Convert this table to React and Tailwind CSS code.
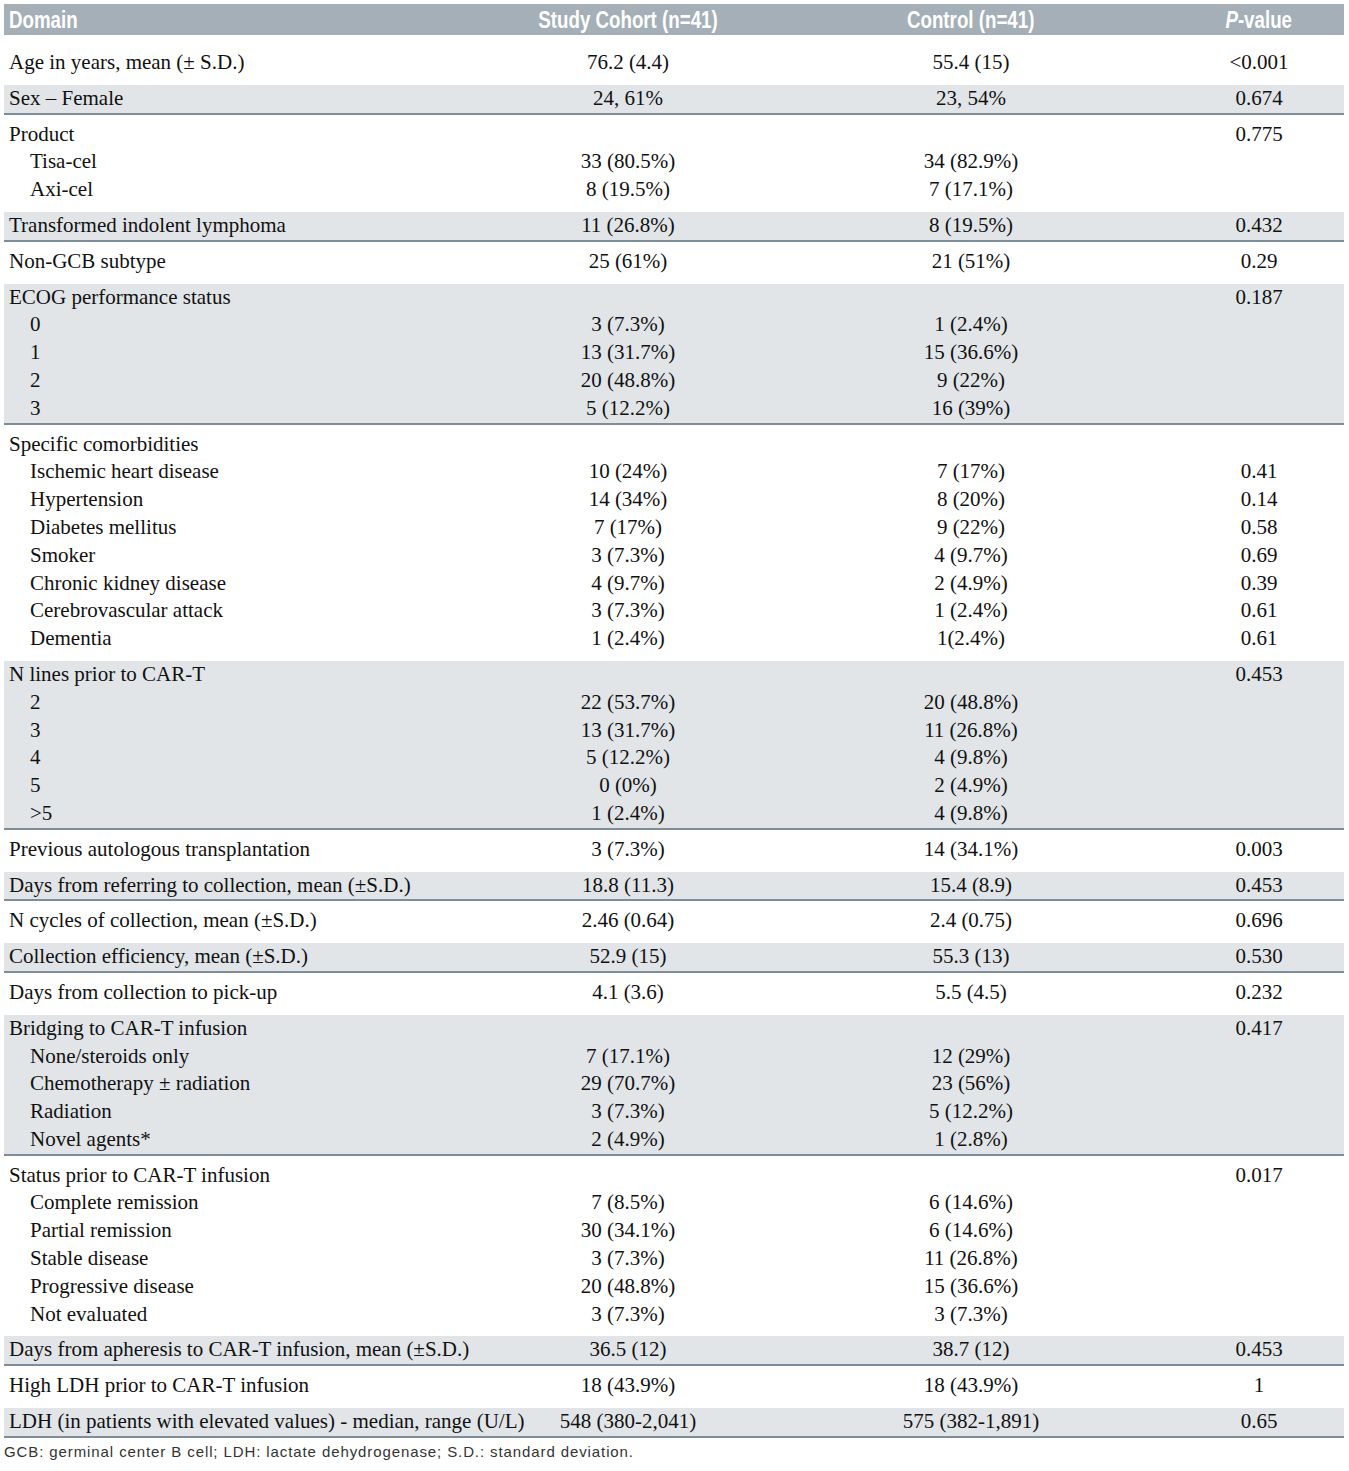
import React from "react";

const groups = [
    { gray: false, first: true, rows: [["Age in years, mean (± S.D.)", "76.2 (4.4)", "55.4 (15)", "<0.001"]] },
    { gray: true, rows: [["Sex – Female", "24, 61%", "23, 54%", "0.674"]] },
    {
        gray: false,
        rows: [
            ["Product", "", "", "0.775"],
            ["Tisa-cel", "33 (80.5%)", "34 (82.9%)", ""],
            ["Axi-cel", "8 (19.5%)", "7 (17.1%)", ""],
        ],
    },
    { gray: true, rows: [["Transformed indolent lymphoma", "11 (26.8%)", "8 (19.5%)", "0.432"]] },
    { gray: false, rows: [["Non-GCB subtype", "25 (61%)", "21 (51%)", "0.29"]] },
    {
        gray: true,
        rows: [
            ["ECOG performance status", "", "", "0.187"],
            ["0", "3 (7.3%)", "1 (2.4%)", ""],
            ["1", "13 (31.7%)", "15 (36.6%)", ""],
            ["2", "20 (48.8%)", "9 (22%)", ""],
            ["3", "5 (12.2%)", "16 (39%)", ""],
        ],
    },
    {
        gray: false,
        rows: [
            ["Specific comorbidities", "", "", ""],
            ["Ischemic heart disease", "10 (24%)", "7 (17%)", "0.41"],
            ["Hypertension", "14 (34%)", "8 (20%)", "0.14"],
            ["Diabetes mellitus", "7 (17%)", "9 (22%)", "0.58"],
            ["Smoker", "3 (7.3%)", "4 (9.7%)", "0.69"],
            ["Chronic kidney disease", "4 (9.7%)", "2 (4.9%)", "0.39"],
            ["Cerebrovascular attack", "3 (7.3%)", "1 (2.4%)", "0.61"],
            ["Dementia", "1 (2.4%)", "1(2.4%)", "0.61"],
        ],
    },
    {
        gray: true,
        rows: [
            ["N lines prior to CAR-T", "", "", "0.453"],
            ["2", "22 (53.7%)", "20 (48.8%)", ""],
            ["3", "13 (31.7%)", "11 (26.8%)", ""],
            ["4", "5 (12.2%)", "4 (9.8%)", ""],
            ["5", "0 (0%)", "2 (4.9%)", ""],
            [">5", "1 (2.4%)", "4 (9.8%)", ""],
        ],
    },
    { gray: false, rows: [["Previous autologous transplantation", "3 (7.3%)", "14 (34.1%)", "0.003"]] },
    { gray: true, rows: [["Days from referring to collection, mean (±S.D.)", "18.8 (11.3)", "15.4 (8.9)", "0.453"]] },
    { gray: false, rows: [["N cycles of collection, mean (±S.D.)", "2.46 (0.64)", "2.4 (0.75)", "0.696"]] },
    { gray: true, rows: [["Collection efficiency, mean (±S.D.)", "52.9 (15)", "55.3 (13)", "0.530"]] },
    { gray: false, rows: [["Days from collection to pick-up", "4.1 (3.6)", "5.5 (4.5)", "0.232"]] },
    {
        gray: true,
        rows: [
            ["Bridging to CAR-T infusion", "", "", "0.417"],
            ["None/steroids only", "7 (17.1%)", "12 (29%)", ""],
            ["Chemotherapy ± radiation", "29 (70.7%)", "23 (56%)", ""],
            ["Radiation", "3 (7.3%)", "5 (12.2%)", ""],
            ["Novel agents*", "2 (4.9%)", "1 (2.8%)", ""],
        ],
    },
    {
        gray: false,
        rows: [
            ["Status prior to CAR-T infusion", "", "", "0.017"],
            ["Complete remission", "7 (8.5%)", "6 (14.6%)", ""],
            ["Partial remission", "30 (34.1%)", "6 (14.6%)", ""],
            ["Stable disease", "3 (7.3%)", "11 (26.8%)", ""],
            ["Progressive disease", "20 (48.8%)", "15 (36.6%)", ""],
            ["Not evaluated", "3 (7.3%)", "3 (7.3%)", ""],
        ],
    },
    { gray: true, rows: [["Days from apheresis to CAR-T infusion, mean (±S.D.)", "36.5 (12)", "38.7 (12)", "0.453"]] },
    { gray: false, rows: [["High LDH prior to CAR-T infusion", "18 (43.9%)", "18 (43.9%)", "1"]] },
    { gray: true, rows: [["LDH (in patients with elevated values) - median, range (U/L)", "548 (380-2,041)", "575 (382-1,891)", "0.65"]] },
];

const cols = "grid grid-cols-[484px_280px_406px_170px]";

const Row = ({ cells, sub }) => (
    <div className={`${cols} leading-[27.8px]`}>
        <div className={`${sub ? "pl-[26px]" : "pl-[5px]"} whitespace-nowrap`}>{cells[0]}</div>
        <div className="text-center whitespace-nowrap">{cells[1]}</div>
        <div className="text-center whitespace-nowrap">{cells[2]}</div>
        <div className="text-center whitespace-nowrap">{cells[3]}</div>
    </div>
);

// header labels are a heavy condensed face in the print; squeeze Arial-width bold to fit
const HeadCell = ({ children, left }) => (
    <div className={left ? "pl-[5px]" : "flex justify-center"}>
        <span className={`inline-block whitespace-nowrap scale-x-[0.78] ${left ? "origin-left" : "origin-center"}`}>
            {children}
        </span>
    </div>
);

const App = () => {
    return (
        <div className="min-h-screen bg-white p-[4px]">
            <div className="w-[1340px]">
                <div className={`${cols} h-[31px] items-center bg-[#a4afb8] text-white font-bold text-[24px] leading-[31px] font-['Liberation_Sans',sans-serif]`}>
                    <HeadCell left>Domain</HeadCell>
                    <HeadCell>Study Cohort (n=41)</HeadCell>
                    <HeadCell>Control (n=41)</HeadCell>
                    <HeadCell>
                        <span className="italic">P</span>-value
                    </HeadCell>
                </div>

                <div className="font-['Liberation_Serif',serif] text-[21px] text-[#111]">
                    {groups.map((g, i) => (
                        <div
                            key={i}
                            className={
                                g.gray
                                    ? "bg-[#e1e5e8] border-b-2 border-[#7d8d99]"
                                    : g.first
                                    ? "pt-[14px] pb-[8px]"
                                    : "pt-[6px] pb-[8px]"
                            }
                        >
                            {g.rows.map((r, j) => (
                                <Row key={j} cells={r} sub={j > 0} />
                            ))}
                        </div>
                    ))}
                </div>

                <div className="mt-[4px] font-['Liberation_Sans',sans-serif] text-[15px] leading-[20px] tracking-[0.9px] text-[#333]">
                    GCB: germinal center B cell; LDH: lactate dehydrogenase; S.D.: standard deviation.
                </div>
            </div>
        </div>
    );
};

export default App;
